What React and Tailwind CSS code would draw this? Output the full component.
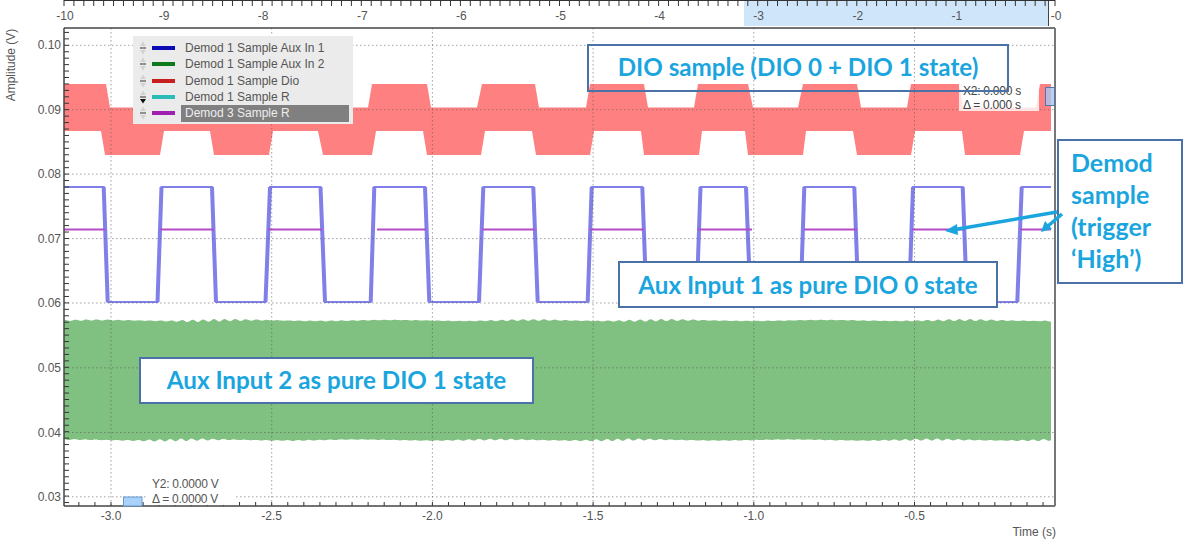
import React from 'react';

// pixel geometry of the plot, read from the scope window
const plot = { l: 64, r: 1055, t: 28, b: 506 };
const gridX = [111, 271.7, 432.4, 593.1, 753.8, 914.5];
const gridY = [45.3, 109.7, 174.1, 238.6, 303, 367.8, 432.5, 496.8];
const xLabels = ['-3.0', '-2.5', '-2.0', '-1.5', '-1.0', '-0.5'];
const yLabels = ['0.10', '0.09', '0.08', '0.07', '0.06', '0.05', '0.04', '0.03'];

const auxEdges = [[103.7, 107.7], [157.5, 161.5], [212, 216], [265.5, 270], [320.5, 325], [370.7, 374.3], [425, 429.3], [479, 483.3], [533.3, 537.7], [587.7, 591.7], [642.3, 646.5], [696.5, 700.5], [746, 750.5], [800.5, 804.3], [854.3, 858.5], [909, 913], [962.7, 967], [1017.3, 1021.7]];
const dioTop = [[106, 110], [158, 162], [212, 216], [262, 266], [318, 322], [368, 372], [427, 431], [477, 482], [535, 539], [586, 590], [644, 648], [694, 698], [748, 753], [798, 803], [857, 861], [907, 911], [959, 963], [1036, 1040]];
const dioBottom = [[101, 105], [160, 164], [210, 214], [269, 273], [318, 323], [372, 376], [423, 427], [481, 485], [532, 536], [590, 594], [641, 644], [699, 702], [745, 748], [803, 806], [853, 857], [911, 915], [962, 965], [1020, 1024]];
const rSegs = [[64, 105], [160, 214], [268, 322], [377, 426], [482, 535], [590, 644], [698, 752], [804, 857], [912, 965], [1020, 1051]];

const steps = (edges, a, b) => {
  const pts = [[64, a]];
  edges.forEach(([x1, x2], i) => {
    pts.push([x1, i % 2 ? b : a], [x2, i % 2 ? a : b]);
  });
  pts.push([1051, edges.length % 2 ? b : a]);
  return pts;
};

const toStr = (pts) => pts.map(([x, y]) => `${x},${y.toFixed(1)}`).join(' ');

// edge of the green band: ripple that fades in and out along the trace
const ripple = (base, seed) => {
  const pts = [];
  for (let x = 64; x <= 1051; x += 1.5) {
    const fade = Math.sin((x + seed) / 47) * Math.sin((x + seed) / 131);
    const amp = 0.25 + 1.05 * fade * fade;
    pts.push([x, base + 0.5 * Math.sin((x + seed) / 23) + amp * Math.sin((x + seed) * 0.59)]);
  }
  return pts;
};

const range = (from, to, step) => {
  const out = [];
  for (let v = from; v <= to + 0.01; v += step) out.push(v);
  return out;
};

const legend = [
  { name: 'Demod 1 Sample Aux In 1', color: 'bg-[#0a0ab4]' },
  { name: 'Demod 1 Sample Aux In 2', color: 'bg-[#0f7a1c]' },
  { name: 'Demod 1 Sample Dio', color: 'bg-[#c81e1e]' },
  { name: 'Demod 1 Sample R', color: 'bg-[#2cbcb8]', down: true },
  { name: 'Demod 3 Sample R', color: 'bg-[#a020b0]', selected: true },
];

function Updown({ down }) {
  return (
    <svg width="8" height="14" viewBox="0 0 8 14" className="shrink-0">
      <path d="M4 0.5 L7 5 H1 Z" fill="#d2d2d2" />
      <rect x="1" y="6.4" width="6" height="1.2" fill="#555" />
      <path d="M4 13.5 L7 9 H1 Z" fill={down ? '#111' : '#d2d2d2'} />
    </svg>
  );
}

function Chart() {
  const red = [...steps(dioTop, 84, 107.5), ...steps(dioBottom, 131, 155).reverse()];
  const green = [...ripple(320.5, 7), ...ripple(440, 40).reverse()];
  const aux = steps(auxEdges, 187, 302);
  return (
    <svg width="1183" height="546" className="block" fontFamily="'Liberation Sans', Arial, sans-serif" fontSize="12" fill="#555">
      {/* overview ruler */}
      <rect x="744" y="0" width="305" height="26" fill="#cfe6fa" />
      <line x1="1048.5" y1="0" x2="1048.5" y2="26" stroke="#444" />
      <line x1={plot.l} y1="0.5" x2={plot.r} y2="0.5" stroke="#333" />
      {range(plot.l, plot.r, 9.91).map((x) => (
        <line key={x} x1={x} y1="0" x2={x} y2="6" stroke="#333" />
      ))}
      {[-10, -9, -8, -7, -6, -5, -4, -3, -2, -1, 0].map((n, i) => (
        <text key={n} x={65 + i * 99.1} y="20" textAnchor="middle">{n === 0 ? '-0' : n}</text>
      ))}

      {/* traces */}
      <polygon points={toStr(red)} fill="#ff8080" />
      <polygon points={toStr(green)} fill="#80c080" />
      <polyline points={toStr(aux)} fill="none" stroke="#8080e8" strokeWidth="2" />
      {auxEdges.map(([x1, x2], i) => (
        <line key={x1} x1={x1} y1={i % 2 ? 302 : 187} x2={x2} y2={i % 2 ? 187 : 302} stroke="#8080e8" strokeWidth="4" />
      ))}
      {rSegs.map(([x1, x2]) => (
        <line key={x1} x1={x1} y1="229.5" x2={x2} y2="229.5" stroke="#b44cc8" strokeWidth="2" />
      ))}

      {/* grid */}
      {gridX.map((x) => (
        <line key={x} x1={x} y1={plot.t} x2={x} y2={plot.b} stroke="#555" strokeOpacity="0.55" strokeDasharray="1.5 2.5" />
      ))}
      {gridY.map((y) => (
        <line key={y} x1={plot.l} y1={y} x2={plot.r} y2={y} stroke="#555" strokeOpacity="0.55" strokeDasharray="1.5 2.5" />
      ))}

      {/* ticks and frame */}
      {range(45.3 - 6.44 * 2, plot.b, 6.44).map((y) => (
        <line key={y} x1={plot.l} y1={y} x2={plot.l + 5} y2={y} stroke="#333" />
      ))}
      {range(111 - 16.07 * 2, plot.r, 16.07).map((x) => (
        <line key={x} x1={x} y1={plot.b} x2={x} y2={plot.b - 4} stroke="#333" />
      ))}
      <line x1={plot.l} y1={plot.t} x2={plot.r} y2={plot.t} stroke="#444" strokeWidth="1.5" />
      <line x1={plot.l} y1={plot.t} x2={plot.l} y2={plot.b} stroke="#444" strokeWidth="1.5" />
      <line x1={plot.l} y1={plot.b} x2={plot.r} y2={plot.b} stroke="#444" strokeWidth="1.5" />
      <line x1={plot.r} y1={plot.t} x2={plot.r} y2={plot.b} stroke="#777" strokeWidth="2" />

      {/* labels */}
      {gridX.map((x, i) => (
        <text key={x} x={x} y="520" textAnchor="middle">{xLabels[i]}</text>
      ))}
      {gridY.map((y, i) => (
        <text key={y} x="61" y={y + 4} textAnchor="end">{yLabels[i]}</text>
      ))}
      <text x="1056" y="536" textAnchor="end">Time (s)</text>
      <text x="0" y="0" textAnchor="middle" transform="translate(15 65) rotate(-90)">Amplitude (V)</text>

      {/* Y2 cursor at the bottom */}
      <rect x="147" y="478" width="89" height="27" fill="#fff" />
      <rect x="123.5" y="497" width="18.5" height="9" fill="#a8d2fa" stroke="#6a9acb" />
      <text x="152" y="488" letterSpacing="-0.25">Y2: 0.0000 V</text>
      <text x="152" y="503" letterSpacing="-0.25">Δ = 0.0000 V</text>
    </svg>
  );
}

export default function App() {
  const callout = "absolute flex items-center justify-center border-2 border-[#4a72a8] font-['Lato',sans-serif] font-bold text-[#1ba5de]";
  return (
    <div className="relative w-[1183px] h-[546px] overflow-hidden bg-white">
      <Chart />

      <div className="absolute left-[133px] top-[36px] flex h-[88px] w-[220px] flex-col bg-[#ebebeb] pt-[4px] font-['Liberation_Sans',sans-serif] text-[12px] text-[#555]">
        {legend.map((row) => (
          <div key={row.name} className="flex h-[16.25px] items-center pl-[6px]">
            <Updown down={row.down} />
            <span className={`ml-[5px] h-[4px] w-[23px] shrink-0 ${row.color}`} />
            <span className={`ml-[6px] flex h-[17px] w-[168px] items-center pl-[4px] ${row.selected ? 'bg-[#808080] text-[#eee]' : ''}`}>{row.name}</span>
          </div>
        ))}
      </div>

      <div className="absolute left-[959px] top-[84px] flex h-[27px] w-[80px] flex-col bg-white/80 pl-[4px] font-['Liberation_Sans',sans-serif] text-[12px] leading-[14px] tracking-[-0.25px] text-[#444]">
        <span>X2: 0.000 s</span>
        <span>Δ = 0.000 s</span>
      </div>
      <div className="absolute left-[1045px] top-[87px] h-[19px] w-[10px] border border-[#5577aa] bg-[#a8c4f0]/80" />

      <div className={`${callout} left-[587px] top-[44px] h-[48px] w-[422px] pb-[1px] text-[24.2px]`}>DIO sample (DIO 0 + DIO 1 state)</div>
      <div className={`${callout} left-[618px] top-[261px] h-[47px] w-[380px] bg-white pt-[1px] text-[24.2px]`}>Aux Input 1 as pure DIO 0 state</div>
      <div className={`${callout} left-[139px] top-[357px] h-[47px] w-[395px] bg-white text-[24.2px]`}>Aux Input 2 as pure DIO 1 state</div>
      <div className={`${callout} left-[1057px] top-[139px] h-[145px] w-[126px] flex-col !items-start bg-white pb-[4px] pl-[12px] text-[25px] leading-[32px]`}>
        <span>Demod</span>
        <span>sample</span>
        <span>(trigger</span>
        <span>‘High’)</span>
      </div>

      <svg width="1183" height="546" className="absolute left-0 top-0" fill="#1ba5de">
        <line x1="1057" y1="212" x2="955" y2="229.5" stroke="#1ba5de" strokeWidth="3.5" />
        <path d="M945 231 L957 224 L958 235 Z" />
        <line x1="1062" y1="214" x2="1048" y2="226" stroke="#1ba5de" strokeWidth="3.5" />
        <path d="M1041 232 L1045 221 L1052 229 Z" />
      </svg>
    </div>
  );
}
